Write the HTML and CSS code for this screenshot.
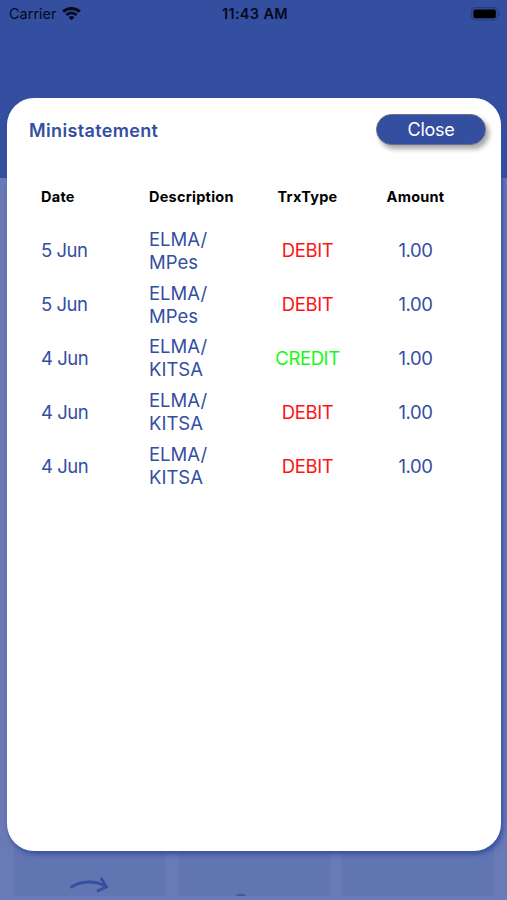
FILE: index.html
```html
<!DOCTYPE html>
<html lang="en">
<head>
    <meta charset="UTF-8">
    <meta name="viewport" content="width=device-width, initial-scale=1.0">
    <title>Ministatement</title>
    <link rel="stylesheet" href="styles.css">
</head>
<body>
    <div class="screen">
        <div class="header">
            <div class="status-bar">
                <div class="carrier">
                    <span>Carrier</span>
                    <svg width="19" height="14" viewBox="0 0 19 14" fill="none" stroke="#050a1c" stroke-width="2.9">
                        <path d="M1.2 4.6C5.6 .4 13.4 .4 17.8 4.6"/>
                        <path d="M4.4 8C7.2 5.2 11.8 5.2 14.6 8"/>
                        <path d="M6.6 10.2C8.2 8.7 10.8 8.7 12.4 10.2L9.5 13.2Z" fill="#050a1c" stroke="none"/>
                    </svg>
                </div>
                <div class="time">11:43 AM</div>
                <div class="battery">
                    <svg width="30" height="14" viewBox="0 0 30 14">
                        <rect x=".6" y=".6" width="26" height="12.4" rx="3.6" fill="none" stroke="#273b7d" stroke-width="1.1"/>
                        <rect x="2.4" y="2.4" width="22.4" height="8.8" rx="1.6" fill="#000"/>
                        <path d="M28.2 4.8Q30.4 6.8 28.2 8.8Z" fill="#273b7d"/>
                    </svg>
                </div>
            </div>
        </div>
        <div class="tiles">
            <div class="tile">
                <svg width="40" height="19" viewBox="0 0 40 19" fill="none" stroke="#344ea0" stroke-width="2.9">
                    <path d="M.6 10.5C10 3.8 24 3.2 36 9.2"/>
                    <path d="M31 1L36.4 9.8L27 14.2"/>
                </svg>
            </div>
            <div class="tile">
                <svg width="38" height="3" viewBox="0 0 38 3">
                    <path d="M0 3Q6 -1.4 12 3Z" fill="#465894"/>
                </svg>
            </div>
            <div class="tile"></div>
        </div>

        <div class="modal">
            <div class="modal-header">
                <h1>Ministatement</h1>
                <button class="close-button">Close</button>
            </div>
            <div class="statement">
                <div class="row heading">
                    <div>Date</div>
                    <div>Description</div>
                    <div class="center">TrxType</div>
                    <div class="center">Amount</div>
                </div>
                <div class="row">
                    <div class="date">5 Jun</div>
                    <div>ELMA/<br>MPes</div>
                    <div class="center debit">DEBIT</div>
                    <div class="center">1.00</div>
                </div>
                <div class="row">
                    <div class="date">5 Jun</div>
                    <div>ELMA/<br>MPes</div>
                    <div class="center debit">DEBIT</div>
                    <div class="center">1.00</div>
                </div>
                <div class="row">
                    <div class="date">4 Jun</div>
                    <div>ELMA/<br>KITSA</div>
                    <div class="center credit">CREDIT</div>
                    <div class="center">1.00</div>
                </div>
                <div class="row">
                    <div class="date">4 Jun</div>
                    <div>ELMA/<br>KITSA</div>
                    <div class="center debit">DEBIT</div>
                    <div class="center">1.00</div>
                </div>
                <div class="row">
                    <div class="date">4 Jun</div>
                    <div>ELMA/<br>KITSA</div>
                    <div class="center debit">DEBIT</div>
                    <div class="center">1.00</div>
                </div>
            </div>
        </div>
    </div>
</body>
</html>
```
FILE: styles.css
```css
body {
    margin: 0;
    font-family: Inter, sans-serif;
    color: #344ea0;
}

.screen {
    position: relative;
    display: flex;
    flex-direction: column;
    justify-content: space-between;
    height: 900px;
    overflow: hidden;
    background-color: #697ab6;
}

.header {
    height: 178px;
    background-color: #344ea0;
}

.status-bar {
    display: grid;
    grid-template-columns: 1fr auto 1fr;
    align-items: center;
    height: 27px;
    padding: 0 6px 0 9px;
    color: #050a1c;
    font-size: 14.5px;
}

.carrier {
    display: flex;
    align-items: center;
    gap: 5px;
}

.time {
    font-weight: 600;
    letter-spacing: 0.35px;
}

.battery {
    display: flex;
    justify-content: flex-end;
}

.tiles {
    display: flex;
    gap: 12px;
    padding: 0 13px 4px 14px;
}

.tile {
    display: flex;
    justify-content: center;
    align-items: flex-end;
    flex: 1;
    height: 56px;
    background-color: #6175b2;
}

.modal {
    position: absolute;
    top: 98px;
    left: 7px;
    width: 494px;
    height: 753px;
    border-radius: 27px;
    box-sizing: border-box;
    background-color: #fff;
    box-shadow: 2px 3px 5px #344ea0;
}

.modal-header {
    display: flex;
    justify-content: space-between;
    align-items: flex-start;
    padding: 16px 15px 0 22px;
}

.modal-header h1 {
    margin: 0;
    font-size: 18px;
    font-weight: 600;
    letter-spacing: 0.35px;
    line-height: 34px;
}

.close-button {
    width: 110px;
    height: 31px;
    padding: 0;
    border: 1px solid #6a6f8c;
    border-radius: 16px;
    background-color: #344ea0;
    color: #fff;
    font-family: inherit;
    font-size: 18px;
    letter-spacing: -0.3px;
    box-shadow: 3px 4px 5px rgba(0, 0, 0, 0.35);
}

.statement {
    padding: 33px 31px 0 34px;
}

.row {
    display: grid;
    grid-template-columns: 108px 104.5px 108px 108px;
    align-items: center;
    height: 53.8px;
    font-size: 18.5px;
    line-height: 23px;
}

.heading {
    height: 30px;
    padding-bottom: 13px;
    color: #000;
    font-size: 14.5px;
    font-weight: 700;
    letter-spacing: 0.25px;
}

.date {
    letter-spacing: -0.5px;
}

.center {
    text-align: center;
}

.row:not(.heading) .center {
    letter-spacing: -0.4px;
}

.debit {
    color: #fc1414;
}

.credit {
    color: #14fa14;
}
```
